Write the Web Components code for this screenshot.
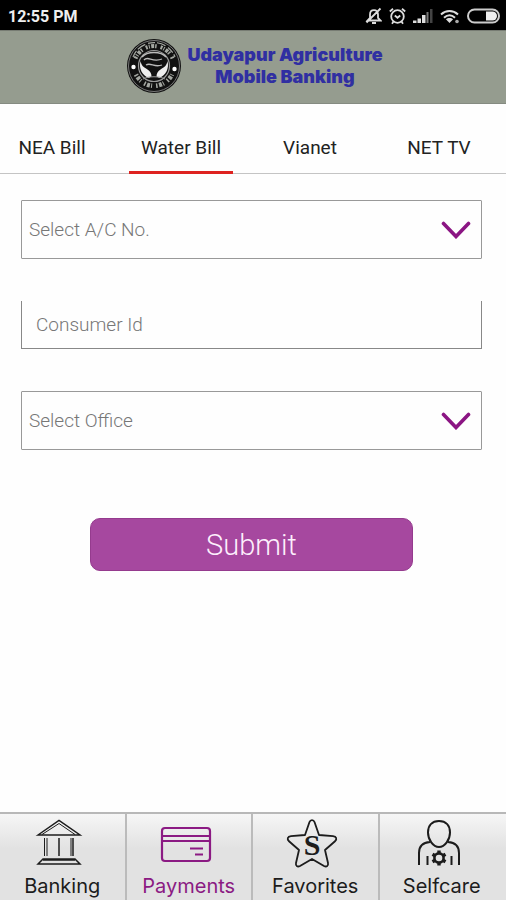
<!DOCTYPE html>
<html lang="en">
<head>
<meta charset="utf-8">
<meta name="viewport" content="width=device-width, initial-scale=1">
<title>Udayapur Agriculture Mobile Banking</title>
<style>
  body {
    margin: 0;
    background: #fefefe;
    color: #111;
    font-family: Roboto, "Liberation Sans", sans-serif;
  }
</style>
</head>
<body>
<bank-app></bank-app>

<script>
  'use strict';
  {
    /**
     * Small base class: clones the markup of the subclass in an open root.
     */
    class BaseElement extends HTMLElement {
      constructor() {
        super();
        this.attachShadow({mode: 'open'});
        const template = document.createElement('template');
        template.innerHTML = this.template;
        this.shadowRoot.appendChild(template.content.cloneNode(true));
      }
    }

    /**
     * `<status-bar>` shows the time and the system icons of the phone.
     */
    class StatusBar extends BaseElement {
      get template() {
        return `
          <style>
            :host {
              display: flex;
              align-items: center;
              justify-content: space-between;
              box-sizing: border-box;
              height: 30px;
              padding: 2px 6px 0 8px;
              background: #000;
              color: #eee;
              font-size: 16px;
              font-weight: 700;
            }
            .icons {
              display: flex;
              align-items: center;
              gap: 7px;
            }
            svg { display: block; }
          </style>
          <span><slot></slot></span>
          <div class="icons">
            <svg width="17" height="18" viewBox="0 0 17 18" fill="none" stroke="#ddd" stroke-width="1.8">
              <path d="M2.500 13.500h13l-2.500-2.700V7.500c0-2.700-1.500-4.300-4-4.300S5 4.800 5 7.500v3.300zM7 16h4M1.500 15.500 15.500 1.500"/>
            </svg>
            <svg width="17" height="18" viewBox="0 0 17 18" fill="none" stroke="#ddd" stroke-width="1.8">
              <circle cx="8.500" cy="9.500" r="6.300"/>
              <path d="M.8 4.500 4 1.800M16.200 4.500 13 1.800M5.800 8.500l2.700 2.300 2.700-2.300M4.500 14.500 3 16.800M12.500 14.500l1.500 2.300"/>
            </svg>
            <svg width="20" height="18" viewBox="0 0 20 18">
              <path fill="#ddd" d="M0 13.500h3.500V16H0zM4.500 11.500H8V16H4.500zM9 8h3.500v8H9z"/>
              <path fill="#777" d="M13.500 5h2v11h-2z"/>
              <path fill="#444" d="M17 2h2.500v14H17z"/>
            </svg>
            <svg width="20" height="18" viewBox="0 0 20 18" fill="none" stroke="#ddd" stroke-width="2">
              <path d="M1 7.500c5-4.600 12-4.600 17 0M4 10.700c3.400-3 7.600-3 11 0"/>
              <path fill="#ddd" stroke="none" d="m9.500 16-3.600-3.700c2-1.800 5.200-1.800 7.200 0z"/>
              <circle cx="17" cy="14.500" r="1.800" fill="#aaa" stroke="none"/>
            </svg>
            <svg width="33" height="18" viewBox="0 0 33 18">
              <rect x="1" y="2.500" width="31" height="13" rx="6.500" fill="none" stroke="#ccc" stroke-width="2"/>
              <path fill="#eee" d="M19 4.500h6.500a4.500 4.500 0 0 1 0 9H19z"/>
            </svg>
          </div>
        `;
      }
    }
    customElements.define('status-bar', StatusBar);

    /**
     * `<brand-header>` is the round seal with the name of the bank.
     */
    class BrandHeader extends BaseElement {
      get template() {
        return `
          <style>
            :host {
              display: flex;
              align-items: center;
              justify-content: center;
              gap: 5px;
              box-sizing: border-box;
              height: 74px;
              padding: 0 0 2px 3px;
              background: #959c8f;
              border-top: 1px solid #777c73;
              border-bottom: 1px solid #858b81;
            }
            h1 {
              margin: 0;
              color: #302fa2;
              font: 900 18px/22px Inter, Roboto, sans-serif;
              text-align: center;
            }
            svg { display: block; flex: none; }
          </style>
          <svg width="56" height="56" viewBox="0 0 56 56" aria-hidden="true">
            <circle cx="28" cy="28" r="27" fill="#111"/>
            <circle cx="28" cy="28" r="25.500" fill="none" stroke="#777" stroke-width="1"/>
            <g fill="none" stroke="#a5a8a2">
              <path stroke-width="4" stroke-dasharray="2 1.200 1 1.400 3 1 1.500 4" d="M9.500 20.500a20 20 0 0 1 37 0"/>
              <path stroke-width="1.200" stroke-dasharray="7 2 9 3" d="M7 19a22.500 22.500 0 0 1 42 0"/>
              <path stroke-width="4.500" stroke-dasharray="1.500 1.500 3 1.200 1 4" d="M10 36.500a20 20 0 0 0 36 0"/>
            </g>
            <circle cx="28" cy="28" r="15.500" fill="#111" stroke="#999" stroke-width="1.200"/>
            <circle cx="7.500" cy="29" r="2.200" fill="#fff"/>
            <circle cx="48.500" cy="31" r="2.200" fill="#fff"/>
            <path fill="#eee" d="M14.500 23c1 5 3 6 7 8.500 3 2 4 4 4 7l-3 1.500c-6-3-10-9-8-17zM41.500 23c-1 5-3 6-7 8.500-3 2-4 4-4 7l3 1.500c6-3 10-9 8-17z"/>
            <path fill="none" stroke="#bbb" stroke-width="1.300" d="M18 22c4-5 8 3 18-1M20 27c5-3 8 3 16 0M16 19c5-6 19-6 24 0"/>
            <path fill="none" stroke="#999" d="M17 41c5-3 17-3 22 0"/>
          </svg>
          <h1><slot></slot></h1>
        `;
      }
    }
    customElements.define('brand-header', BrandHeader);

    /**
     * `<bill-tab>` is one tab, `active` draws the red line under it.
     */
    class BillTab extends BaseElement {
      get template() {
        return `
          <style>
            :host { display: block; }
            button {
              display: block;
              width: 100%;
              height: 70px;
              padding: 20px 0 0;
              border: 0;
              border-bottom: 3px solid transparent;
              background: none;
              color: #222;
              font: 400 19px/22px Roboto, sans-serif;
              white-space: nowrap;
            }
            :host([active]) button { border-bottom-color: #de2320; }
          </style>
          <button type="button" role="tab"><slot></slot></button>
        `;
      }

      connectedCallback() {
        this.shadowRoot.querySelector('button')
          .setAttribute('aria-selected', this.hasAttribute('active'));
      }
    }
    customElements.define('bill-tab', BillTab);

    class BillTabs extends BaseElement {
      get template() {
        return `
          <style>
            :host {
              display: grid;
              grid-template-columns: repeat(4, 1fr);
              column-gap: 25px;
              padding-right: 15px;
              background: linear-gradient(#c4c4c4, #c4c4c4) bottom / 100% 1px no-repeat;
            }
          </style>
          <slot></slot>
        `;
      }
    }
    customElements.define('bill-tabs', BillTabs);

    /**
     * `<select-field label="...">` is a boxed drop-down with a purple chevron.
     */
    class SelectField extends BaseElement {
      get template() {
        return `
          <style>
            :host { display: block; }
            .box {
              display: grid;
              align-items: center;
              border: 1px solid #999;
              border-radius: 1px;
            }
            select, svg { grid-area: 1 / 1; }
            select {
              appearance: none;
              width: 100%;
              height: 57px;
              padding: 0 48px 0 7px;
              border: 0;
              background: none;
              color: #777;
              font: 300 19px/22px Roboto, sans-serif;
            }
            svg {
              justify-self: end;
              margin-right: 10px;
              pointer-events: none;
            }
          </style>
          <div class="box">
            <select><option></option></select>
            <svg width="30" height="18" viewBox="0 0 30 18" fill="none" stroke="#8b1583" stroke-width="3.600" stroke-linecap="round">
              <path d="M2.500 2.500 15 15.500 27.500 2.500"/>
            </svg>
          </div>
        `;
      }

      connectedCallback() {
        const label = this.getAttribute('label');
        const select = this.shadowRoot.querySelector('select');
        select.setAttribute('aria-label', label);
        select.options[0].textContent = label;
      }
    }
    customElements.define('select-field', SelectField);

    /**
     * `<text-field label="...">` is an input without a top border.
     */
    class TextField extends BaseElement {
      get template() {
        return `
          <style>
            :host { display: block; }
            input {
              display: block;
              box-sizing: border-box;
              width: 100%;
              height: 48px;
              padding: 0 14px;
              border: 1px solid #888;
              border-top: 0;
              border-radius: 0;
              background: none;
              color: #333;
              font: 300 19px/22px Roboto, sans-serif;
            }
            input::placeholder { color: #777; opacity: 1; }
          </style>
          <input type="text">
        `;
      }

      connectedCallback() {
        const label = this.getAttribute('label');
        const input = this.shadowRoot.querySelector('input');
        input.setAttribute('aria-label', label);
        input.placeholder = label;
      }
    }
    customElements.define('text-field', TextField);

    class SubmitButton extends BaseElement {
      get template() {
        return `
          <style>
            :host { display: block; }
            button {
              display: block;
              width: 100%;
              height: 53px;
              padding: 0;
              border: 1px solid #953b8e;
              border-radius: 10px;
              background: #a6489f;
              color: #fdeffc;
              font: 300 29px/36px Roboto, sans-serif;
            }
          </style>
          <button type="button"><slot></slot></button>
        `;
      }
    }
    customElements.define('submit-button', SubmitButton);

    /**
     * `<nav-item>` is one cell of the bottom bar: an icon over its name.
     */
    class NavItem extends BaseElement {
      get template() {
        return `
          <style>
            :host {
              display: block;
              border-right: 2px solid #bbb;
              color: #1c1c1c;
            }
            :host(:last-child) { border-right-color: transparent; }
            :host([active]) { color: #8b1a83; }
            a {
              display: flex;
              flex-direction: column;
              align-items: center;
              padding-top: 4px;
              color: inherit;
              text-decoration: none;
              font: 400 20px/24px Inter, "Liberation Sans", sans-serif;
            }
            .icon {
              display: flex;
              height: 52px;
              margin-bottom: 4px;
              margin-right: 6px;
            }
          </style>
          <a href="#">
            <span class="icon"><slot name="icon"></slot></span>
            <span><slot></slot></span>
          </a>
        `;
      }
    }
    customElements.define('nav-item', NavItem);

    class BottomNav extends BaseElement {
      get template() {
        return `
          <style>
            :host { display: block; }
            nav {
              display: grid;
              grid-template-columns: repeat(4, 1fr);
              height: 86px;
              border-top: 2px solid #b8b8b8;
              background: linear-gradient(#f6f6f6, #e2e2e2 40%, #e2e2e2);
            }
          </style>
          <nav><slot></slot></nav>
        `;
      }
    }
    customElements.define('bottom-nav', BottomNav);

    class BankApp extends BaseElement {
      get template() {
        return `
          <style>
            :host {
              display: flex;
              flex-direction: column;
              min-height: 100vh;
            }
            main {
              flex: 1;
              padding: 26px 24px 24px 21px;
            }
            text-field { margin: 42px 0; }
            submit-button {
              width: 70%;
              margin: 68px auto 0;
            }
          </style>
          <status-bar>12:55 PM</status-bar>
          <brand-header>Udayapur Agriculture<br>Mobile Banking</brand-header>
          <bill-tabs role="tablist">
            <bill-tab>NEA Bill</bill-tab>
            <bill-tab active>Water Bill</bill-tab>
            <bill-tab>Vianet</bill-tab>
            <bill-tab>NET TV</bill-tab>
          </bill-tabs>
          <main>
            <select-field label="Select A/C No."></select-field>
            <text-field label="Consumer Id"></text-field>
            <select-field label="Select Office"></select-field>
            <submit-button>Submit</submit-button>
          </main>
          <bottom-nav>
            <nav-item>
              <svg slot="icon" width="52" height="52" viewBox="0 0 52 52" fill="none" stroke="currentColor" stroke-width="1.500">
                <path d="M5 17 26 2.500 47 17zM26 20v18M40 20v18M5 46l5-5h32l5 5zM10 42h32"/>
                <path stroke-width="1" d="M9 16.500 26 5.500 42 16.500M11.500 20v18M14 20v18M38 20v18"/>
              </svg>
              Banking
            </nav-item>
            <nav-item active>
              <svg slot="icon" width="52" height="52" viewBox="0 0 52 52" fill="none" stroke="currentColor" stroke-width="2.200">
                <rect x="2" y="10" width="48" height="33" rx="3"/>
                <path d="M2 18h48M2 23h48M30 30.500h13M35 36.500h8"/>
              </svg>
              Payments
            </nav-item>
            <nav-item>
              <svg slot="icon" width="52" height="52" viewBox="0 0 52 52">
                <path fill="none" stroke="currentColor" stroke-width="1.800" stroke-linejoin="round" d="M23.500 4c1-2.600 4-2.600 5 0L33 17l14 1.200c3.500.3 4.300 3 2 5L39 32l3 13c.6 3-1.500 4.300-4 3L26 41l-12 7c-2.500 1.300-4.600 0-4-3l3-13L3 23.200c-2.300-2-1.500-4.700 2-5L19 17z"/>
                <text x="26" y="37" text-anchor="middle" fill="currentColor" font-family="Liberation Serif, serif" font-size="30" font-weight="700">S</text>
              </svg>
              Favorites
            </nav-item>
            <nav-item>
              <svg slot="icon" width="52" height="52" viewBox="0 0 52 52" fill="none" stroke="currentColor" stroke-width="2">
                <path d="M26 3c7 0 11 4.500 11 11.500 0 7-5 14.500-11 14.500S15 21.500 15 14.500C15 7.500 19 3 26 3zM6 47V35c0-7 4-10.500 11-11M46 47V35c0-7-4-10.500-11-11M14.500 38v9M38.500 38v9"/>
                <circle cx="26" cy="40" r="4.600" stroke-width="2.600"/>
                <path stroke-width="3.400" d="M26 32.500v3M26 44.500v3M19.500 36.200l2.600 1.500M29.900 42.300l2.600 1.500M32.500 36.200l-2.600 1.500M22.100 42.300l-2.600 1.500"/>
              </svg>
              Selfcare
            </nav-item>
          </bottom-nav>
        `;
      }
    }
    customElements.define('bank-app', BankApp);
  }
</script>
</body>
</html>
